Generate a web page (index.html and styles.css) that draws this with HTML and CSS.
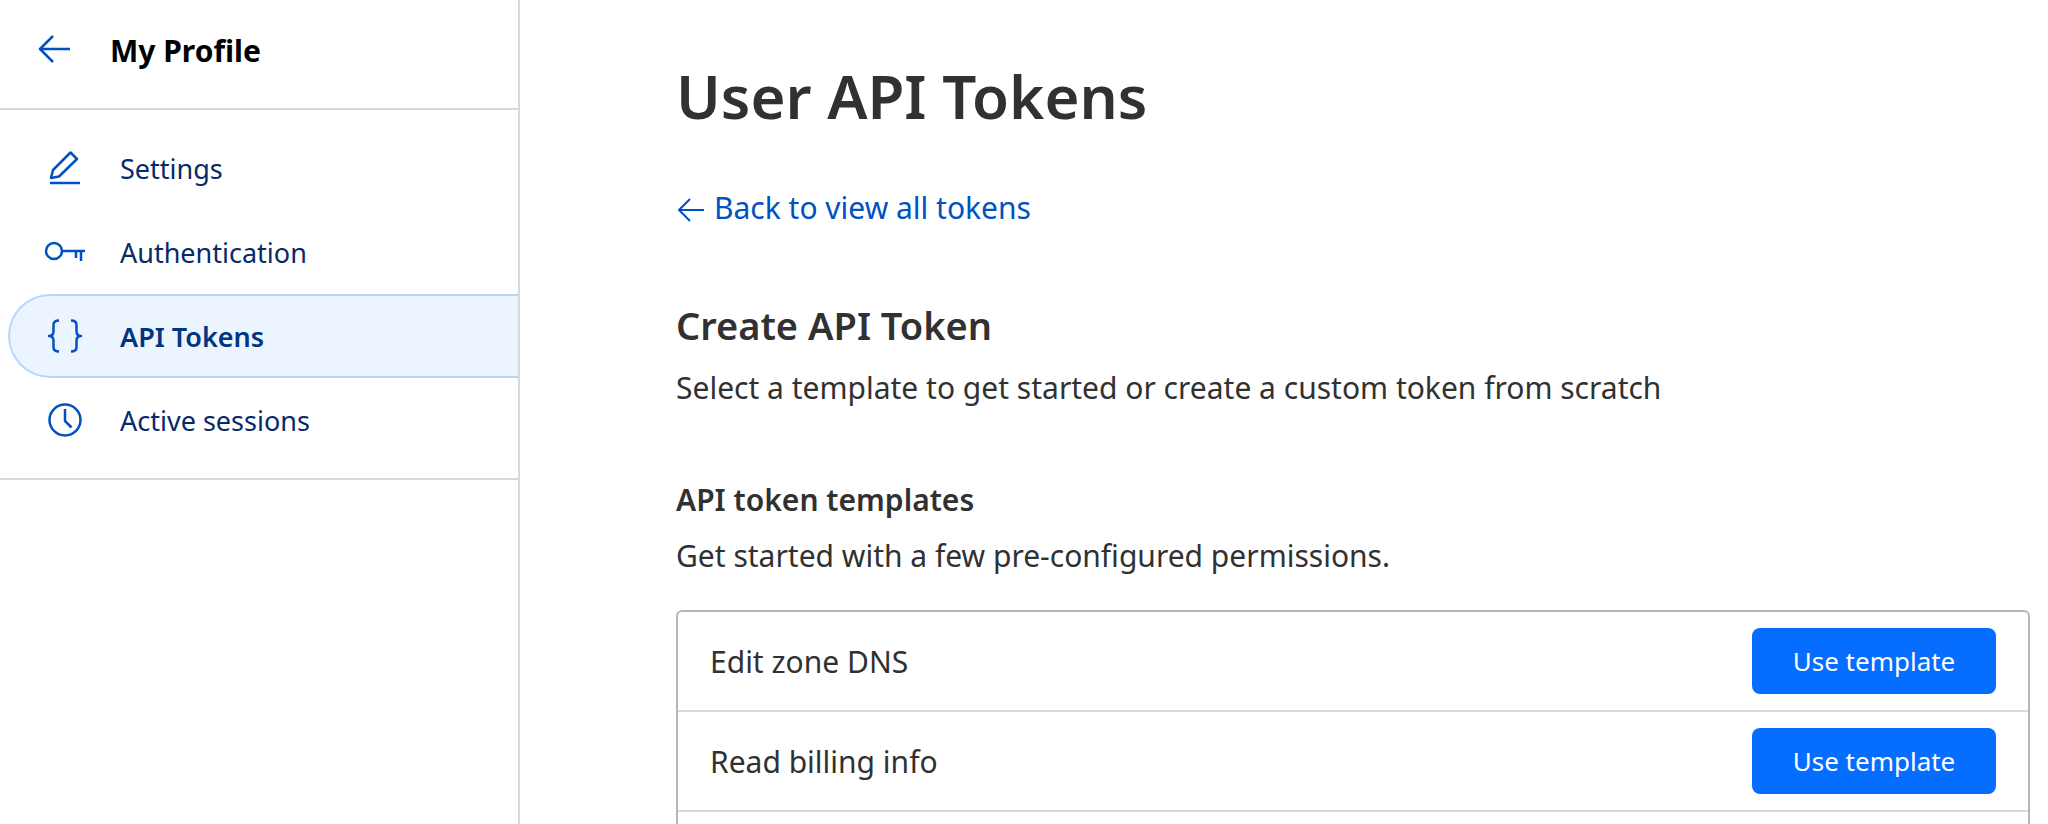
FILE: index.html
```html
<!DOCTYPE html>
<html lang="en">
<head>
<meta charset="utf-8">
<title>User API Tokens</title>
<link rel="stylesheet" href="styles.css">
</head>
<body>
<div class="app">
  <aside class="sidebar">
    <header class="profile">
      <a class="back" href="#" aria-label="Back"><svg width="32" height="28" viewBox="0 0 32 28"><path d="M15 -1 L2 12 L15 25 M2 12 H32"/></svg></a>
      <h2 class="profile-title">My Profile</h2>
    </header>
    <nav class="nav">
      <a class="nav-item" href="#"><svg width="42" height="42" viewBox="0 0 42 42"><path d="M6 36H36 M7 31L9 23L26.500 5.500L33 12L15 29.500Z"/></svg>Settings</a>
      <a class="nav-item" href="#"><svg width="42" height="42" viewBox="0 0 42 42"><circle cx="10" cy="20" r="8"/><path d="M18 20H41 M32 20V27 M37 20V30"/></svg>Authentication</a>
      <a class="nav-item active" href="#"><svg width="42" height="42" viewBox="0 0 42 42"><path d="M15 5.500Q9.500 5.500 9.500 10V16Q9.500 21 5 21Q9.500 21 9.500 26V32Q9.500 36.500 15 36.500 M27 5.500Q32.500 5.500 32.500 10V16Q32.500 21 37 21Q32.500 21 32.500 26V32Q32.500 36.500 27 36.500"/></svg>API Tokens</a>
      <a class="nav-item" href="#"><svg width="42" height="42" viewBox="0 0 42 42"><circle cx="21" cy="21" r="15.500"/><path d="M21 10V22L27.500 28.500"/></svg>Active sessions</a>
    </nav>
  </aside>
  <main class="main">
    <h1 class="title">User API Tokens</h1>
    <a class="back-link" href="#"><svg width="28" height="28" viewBox="0 0 28 28"><path d="M14 5L3 16L14 27M3 16H28"/></svg>Back to view all tokens</a>
    <h2 class="section-title">Create API Token</h2>
    <p class="text intro">Select a template to get started or create a custom token from scratch</p>
    <h3 class="subtitle">API token templates</h3>
    <p class="text">Get started with a few pre-configured permissions.</p>
    <ul class="templates">
      <li class="row"><span>Edit zone DNS</span><button class="button" type="button">Use template</button></li>
      <li class="row"><span>Read billing info</span><button class="button" type="button">Use template</button></li>
      <li class="row"></li>
    </ul>
  </main>
</div>
</body>
</html>
```
FILE: styles.css
```css
* { box-sizing: border-box; }
body { margin: 0; font-family: "Noto Sans", sans-serif; color: #313131; background: #fff; }
h1, h2, h3, p, ul { margin: 0; padding: 0; }
svg { flex: none; overflow: visible; fill: none; stroke: #0051c3; stroke-width: 2.5; stroke-linejoin: round; }
.app { display: flex; height: 100vh; overflow: hidden; }
.sidebar { flex: none; width: 520px; border-right: 2px solid #d9d9d9; }
.profile { display: flex; align-items: center; gap: 40px; height: 110px; padding: 0 38px 6px; border-bottom: 2px solid #d9d9d9; }
.back { display: flex; }
.profile-title { font-size: 30px; line-height: 40px; font-weight: 700; color: #000; }
.nav { padding: 16px 0 16px 8px; border-bottom: 2px solid #d9d9d9; }
.nav-item { display: flex; align-items: center; gap: 34px; height: 84px; padding-left: 34px; font-size: 27px; color: #062b69; text-decoration: none; border: 2px solid transparent; border-right: 0; border-radius: 42px 0 0 42px; }
.active { font-weight: 600; color: #003681; background: #ebf4ff; border-color: #b9d6ff; }
.main { flex: 1; padding: 50px 18px 0 156px; }
.title { font-size: 60px; line-height: 92px; font-weight: 600; }
.back-link { display: flex; align-items: center; gap: 10px; width: fit-content; margin-top: 42px; font-size: 30px; line-height: 48px; color: #0051c3; text-decoration: none; }
.back-link svg { stroke-width: 2; }
.section-title { margin-top: 68px; font-size: 38px; line-height: 50px; font-weight: 600; }
.text { margin-top: 8px; font-size: 30px; line-height: 48px; }
.intro { margin-top: 14px; }
.subtitle { margin-top: 64px; font-size: 30px; line-height: 48px; font-weight: 600; }
.templates { margin-top: 30px; list-style: none; border: 2px solid #b6b6b6; border-radius: 6px; }
.row { display: flex; align-items: center; justify-content: space-between; height: 100px; padding: 0 32px; font-size: 30px; border-bottom: 2px solid #d9d9d9; }
.button { height: 66px; min-width: 244px; border: 0; border-radius: 8px; background: #056dff; color: #fff; font: 26px "Noto Sans", sans-serif; }
```
